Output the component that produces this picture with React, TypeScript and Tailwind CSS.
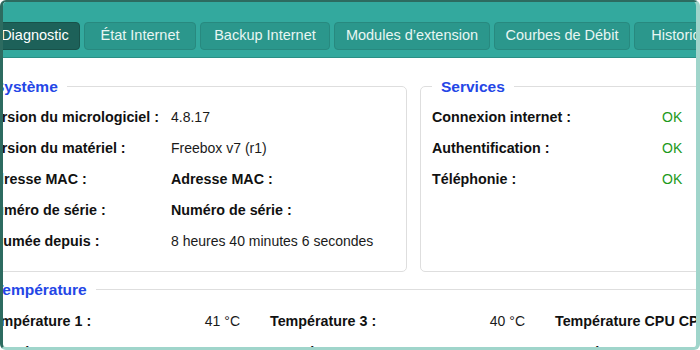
import React from 'react';

const tabs = [
  { label: 'Diagnostic', w: 'w-[90px]', active: true },
  { label: 'État Internet', w: 'w-[112px]' },
  { label: 'Backup Internet', w: 'w-[130px]' },
  { label: 'Modules d’extension', w: 'w-[156px]' },
  { label: 'Courbes de Débit', w: 'w-[136px]' },
  { label: 'Historique', w: 'w-[100px]' },
];

const systeme = [
  { label: 'Version du micrologiciel :', value: '4.8.17' },
  { label: 'Version du matériel :', value: 'Freebox v7 (r1)' },
  { label: 'Adresse MAC :', value: 'Adresse MAC :', bold: true },
  { label: 'Numéro de série :', value: 'Numéro de série :', bold: true },
  { label: 'Allumée depuis :', value: '8 heures 40 minutes 6 secondes' },
];

const services = ['Connexion internet :', 'Authentification :', 'Téléphonie :'];

const temperatures = [
  ['Température 1 :', '41 °C'],
  ['Température 3 :', '40 °C'],
  ['Température CPU CPU :', '46 °C'],
  ['Température 2 :', '40 °C'],
  ['Température CPU M :', '41 °C'],
  ['Température CPU B :', '42 °C'],
];

function Legend({ children }: { children: React.ReactNode }) {
  return (
    <legend className="px-[9px] text-[15.5px] leading-[17px] font-bold text-[#2446e6]">
      {children}
    </legend>
  );
}

export default function App() {
  return (
    <div className="w-[700px] h-[350px] overflow-hidden bg-white rounded-[6px] border-t-2 border-l-[3px] border-r-[4px] border-b-[3px] border-t-[#2d6b60] border-l-[#2d6b60] border-r-[#a0d5cb] border-b-[#a0d5cb] font-['Liberation_Sans',Arial,sans-serif] text-[#111]">
      {/* Tabs */}
      <header className="h-[56px] bg-[#33a99e] border-b border-[#2a9086] pt-[20px]">
        <nav className="flex gap-[4px] -ml-[13px]">
          {tabs.map((t) => (
            <div
              key={t.label}
              className={`${t.w} shrink-0 h-[28px] flex items-center justify-center rounded-[4px] border text-[14.5px] ${
                t.active
                  ? 'bg-[#1d6159] border-[#185149] text-white'
                  : 'bg-[#2b978c] border-[#28897f] text-[#e8f6f3]'
              }`}
            >
              {t.label}
            </div>
          ))}
        </nav>
      </header>

      <main className="-ml-[30px] w-[881px] pt-[20px]">
        <div className="flex gap-[13px]">
          {/* Système */}
          <fieldset className="w-[434px] h-[194px] border border-[#dedede] rounded-[5px] px-[11px] pt-[7px]">
            <Legend>Système</Legend>
            {systeme.map((r) => (
              <div key={r.label} className="h-[31px] flex items-center">
                <span className="w-[186px] shrink-0 font-bold text-[14.3px]">{r.label}</span>
                <span className={r.bold ? 'font-bold text-[14.3px]' : 'text-[14px] text-[#1a1a1a]'}>
                  {r.value}
                </span>
              </div>
            ))}
          </fieldset>

          {/* Services */}
          <fieldset className="w-[434px] h-[194px] border border-[#dedede] rounded-[5px] px-[11px] pt-[7px]">
            <Legend>Services</Legend>
            {services.map((s) => (
              <div key={s} className="h-[31px] flex items-center">
                <span className="w-[230px] shrink-0 font-bold text-[14.3px]">{s}</span>
                <span className="text-[14px] text-[#1d9a20]">OK</span>
              </div>
            ))}
          </fieldset>
        </div>

        {/* Température */}
        <fieldset className="mt-[9px] w-[881px] border border-[#dedede] rounded-[5px] px-[11px] pt-[8px] pb-[10px]">
          <Legend>Température</Legend>
          <div className="grid grid-cols-[255px_255px_255px] gap-x-[30px]">
            {temperatures.map(([label, value]) => (
              <div key={label} className="h-[31px] flex items-center justify-between">
                <span className="font-bold text-[14.3px] whitespace-nowrap">{label}</span>
                <span className="text-[14px] text-[#1a1a1a]">{value}</span>
              </div>
            ))}
          </div>
        </fieldset>
      </main>
    </div>
  );
}
